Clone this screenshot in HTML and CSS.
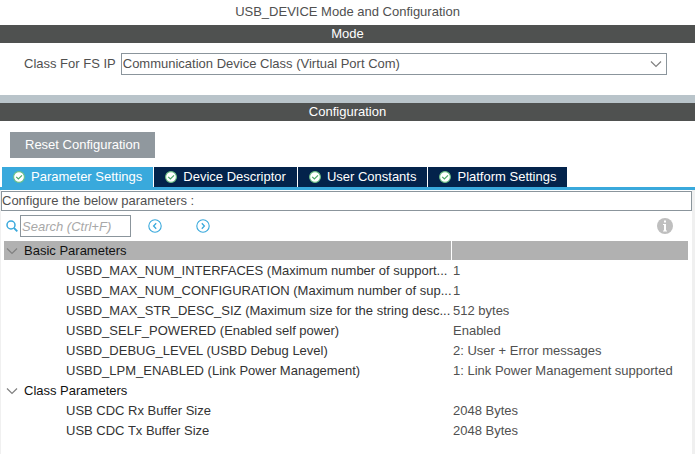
FILE: index.html
```
<!DOCTYPE html>
<html lang="en">
<head>
    <meta charset="UTF-8">
    <title>USB_DEVICE Mode and Configuration</title>
    <link rel="stylesheet" href="styles.css">
</head>
<body>
<svg class="defs" width="0" height="0">
    <symbol id="check" viewBox="0 0 12 12">
        <circle cx="6" cy="6" r="5.4" fill="#fff" stroke="#6cc084" stroke-width="1.1"/>
        <path d="M3.2 5.8l2.2 2.2 3.6-3.6" fill="none" stroke="#4aa866" stroke-width="1.2"/>
    </symbol>
    <symbol id="down" viewBox="0 0 12 8">
        <path d="M1 1.5l5 5 5-5" fill="none" stroke="#808080" stroke-width="1.2"/>
    </symbol>
</svg>
<h1 class="title">USB_DEVICE Mode and Configuration</h1>
<h2 class="bar">Mode</h2>
<div class="mode">
    <label for="fsClass">Class For FS IP</label>
    <div class="select">
        <select id="fsClass">
            <option>Communication Device Class (Virtual Port Com)</option>
        </select>
        <svg class="arrow" width="12" height="8"><use href="#down"/></svg>
    </div>
</div>
<div class="splitter"></div>
<h2 class="bar">Configuration</h2>
<div class="actions">
    <button class="reset" type="button">Reset Configuration</button>
</div>
<div class="tabs">
    <button class="tab on" type="button"><svg width="12" height="12"><use href="#check"/></svg>Parameter Settings</button>
    <button class="tab" type="button"><svg width="12" height="12"><use href="#check"/></svg>Device Descriptor</button>
    <button class="tab" type="button"><svg width="12" height="12"><use href="#check"/></svg>User Constants</button>
    <button class="tab" type="button"><svg width="12" height="12"><use href="#check"/></svg>Platform Settings</button>
</div>
<div class="panel">
    <p class="hint">Configure the below parameters :</p>
    <div class="tools">
        <svg width="12" height="12" viewBox="0 0 12 12" fill="none" stroke="#39a9dc">
            <circle cx="5" cy="5" r="4" stroke-width="1.5"/>
            <path d="M8 8l3.3 3.3" stroke-width="1.8"/>
        </svg>
        <input class="search" type="text" placeholder="Search (Ctrl+F)" aria-label="Search">
        <button class="nav" type="button" aria-label="Previous">
            <svg width="14" height="14" viewBox="0 0 14 14" fill="none" stroke="#39a9dc">
                <circle cx="7" cy="7" r="6.2" stroke-width="1.1"/>
                <path d="M8.2 4.2L5.6 7l2.6 2.8" stroke-width="1.3"/>
            </svg>
        </button>
        <button class="nav" type="button" aria-label="Next">
            <svg width="14" height="14" viewBox="0 0 14 14" fill="none" stroke="#39a9dc">
                <circle cx="7" cy="7" r="6.2" stroke-width="1.1"/>
                <path d="M5.8 4.2L8.4 7 5.8 9.8" stroke-width="1.3"/>
            </svg>
        </button>
        <button class="info" type="button" aria-label="Information">
            <svg width="16" height="16" viewBox="0 0 16 16">
                <circle cx="8" cy="8" r="8" fill="#bfbfbf"/>
                <path d="M7 2.5h2v2H7zM6 6h3v6.500h1v1H6v-1h1V7H6z" fill="#fff"/>
            </svg>
        </button>
    </div>
    <table class="params">
        <colgroup>
            <col>
            <col class="value">
        </colgroup>
        <tbody>
        <tr class="group on">
            <th><svg width="12" height="8"><use href="#down"/></svg>Basic Parameters</th>
            <td></td>
        </tr>
        <tr>
            <td>USBD_MAX_NUM_INTERFACES (Maximum number of support...</td>
            <td>1</td>
        </tr>
        <tr>
            <td>USBD_MAX_NUM_CONFIGURATION (Maximum number of sup...</td>
            <td>1</td>
        </tr>
        <tr>
            <td>USBD_MAX_STR_DESC_SIZ (Maximum size for the string desc...</td>
            <td>512 bytes</td>
        </tr>
        <tr>
            <td>USBD_SELF_POWERED (Enabled self power)</td>
            <td>Enabled</td>
        </tr>
        <tr>
            <td>USBD_DEBUG_LEVEL (USBD Debug Level)</td>
            <td>2: User + Error messages</td>
        </tr>
        <tr>
            <td>USBD_LPM_ENABLED (Link Power Management)</td>
            <td>1: Link Power Management supported</td>
        </tr>
        <tr class="group">
            <th><svg width="12" height="8"><use href="#down"/></svg>Class Parameters</th>
            <td></td>
        </tr>
        <tr>
            <td>USB CDC Rx Buffer Size</td>
            <td>2048 Bytes</td>
        </tr>
        <tr>
            <td>USB CDC Tx Buffer Size</td>
            <td>2048 Bytes</td>
        </tr>
        </tbody>
    </table>
</div>
</body>
</html>
```
FILE: styles.css
```
*{
    padding: 0;
    margin: 0;
    box-sizing: border-box;
}
html,body{
    height: 100%;
}
body{
    display: flex;
    flex-direction: column;
    font: 13px/18px "Liberation Sans", Arial, sans-serif;
    color: #505050;
    background: #fff;
}
button,input,select{
    font: inherit;
    color: inherit;
    border: none;
    border-radius: 0;
    background: none;
}
svg{
    display: block;
    flex: none;
}
.defs{
    position: absolute;
}
.title{
    padding: 3px 0 4px;
    font-size: 13px;
    font-weight: normal;
    text-align: center;
}
.bar{
    font-size: 13px;
    font-weight: normal;
    text-align: center;
    color: #fff;
    background: #4f5150;
}
.mode{
    display: flex;
    align-items: center;
    gap: 5px;
    padding: 10px 28px 20px 24px;
}
.select{
    position: relative;
    flex: 1;
}
.select select{
    display: block;
    width: 100%;
    height: 22px;
    padding: 0 20px 0 1px;
    border: 1px solid #8b959c;
    appearance: none;
}
.arrow{
    position: absolute;
    top: 7px;
    right: 5px;
    pointer-events: none;
}
.splitter{
    height: 8px;
    background: #b9c4ca;
}
.actions{
    padding: 11px 10px 9px;
}
.reset{
    display: block;
    height: 26px;
    padding: 0 15px;
    color: #fff;
    background: #90989e;
}
.tabs{
    display: flex;
    gap: 1px;
    padding-left: 2px;
    border-bottom: 3px solid #39a9dc;
}
.tab{
    display: flex;
    align-items: center;
    gap: 6px;
    height: 20px;
    padding: 0 11px;
    color: #fff;
    background: #03234b;
}
.tab.on{
    background: #39a9dc;
}
.panel{
    flex: 1;
    padding-top: 1px;
    border-left: 1px solid #f0f0f0;
    border-right: 3px solid #f0f0f0;
}
.hint{
    border: 1px solid #8b959c;
}
.tools{
    display: flex;
    align-items: center;
    padding: 4px 19px 4px 5px;
}
.search{
    width: 111px;
    height: 22px;
    margin: 0 17px 0 2px;
    padding: 0 1px;
    border: 1px solid #8b959c;
    font-style: italic;
}
.search::placeholder{
    color: #a8a8a8;
}
.nav{
    margin-right: 34px;
}
.info{
    margin-left: auto;
}
.params{
    width: calc(100% - 7px);
    margin-left: 3px;
    border-spacing: 0;
    table-layout: fixed;
}
.params .value{
    width: 237px;
}
.params td,
.params th{
    height: 20px;
    padding: 0 0 1px 2px;
    text-align: left;
    font-weight: normal;
    white-space: nowrap;
}
.params td:first-child{
    padding-left: 62px;
    color: #333;
}
.params .group th{
    display: flex;
    align-items: center;
    gap: 6px;
    color: #111;
}
.params .on th,
.params .on td{
    background: #b1b1b1;
    border-bottom: 1px solid #fff;
}
.params .on th{
    padding-bottom: 0;
}
.params .on td{
    border-left: 1px solid #fff;
}
```
